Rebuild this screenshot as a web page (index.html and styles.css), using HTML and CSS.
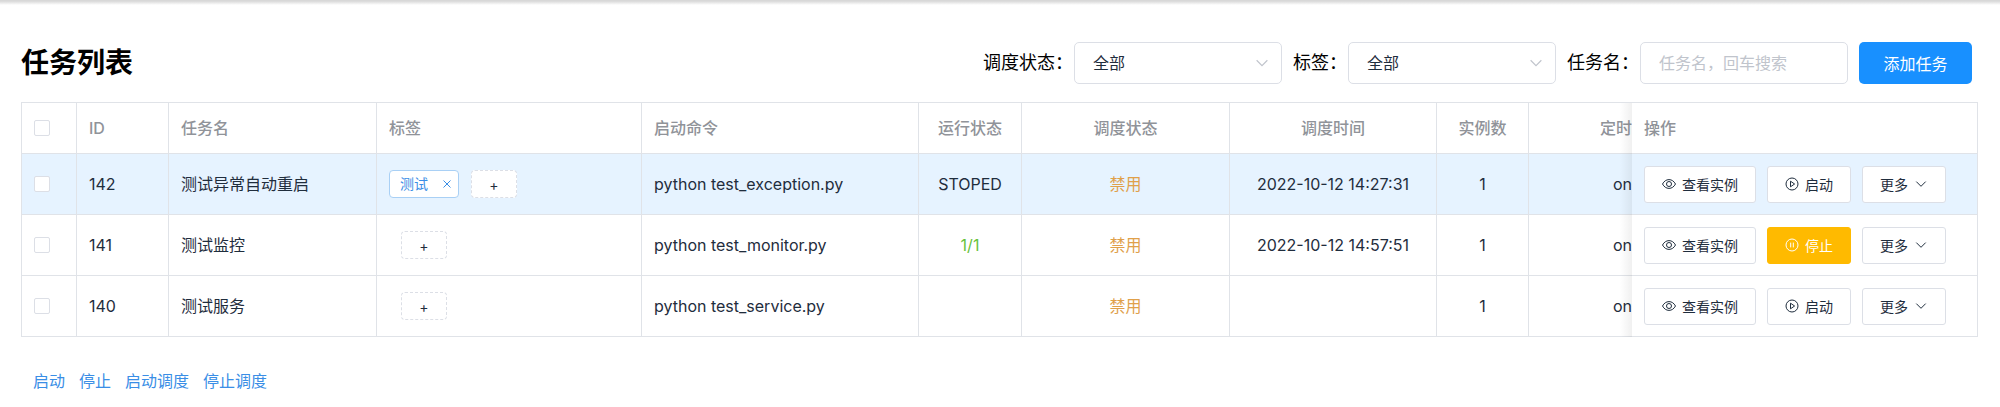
FILE: index.html
```html
<!DOCTYPE html>
<html lang="zh-CN">

<head>
    <meta charset="UTF-8">
    <meta name="viewport" content="width=device-width, initial-scale=1">
    <title>任务列表</title>
    <link rel="stylesheet" href="styles.css">
</head>

<body>
    <!-- 图标 -->
    <svg class="sprite" aria-hidden="true">
        <symbol id="icon-view" viewBox="0 0 14 14">
            <path d="M.5 7C2 4.200 4.300 2.600 7 2.600S12 4.200 13.500 7C12 9.800 9.700 11.400 7 11.400S2 9.800.5 7z" />
            <circle cx="7" cy="7" r="2.500" />
        </symbol>
        <symbol id="icon-play" viewBox="0 0 14 14">
            <circle cx="7" cy="7" r="6" />
            <path d="M5.500 4.200v5.600L9.600 7z" />
        </symbol>
        <symbol id="icon-pause" viewBox="0 0 14 14">
            <circle cx="7" cy="7" r="6" />
            <path d="M5.700 4.600v4.800M8.300 4.600v4.800" />
        </symbol>
        <symbol id="icon-down" viewBox="0 0 14 14">
            <path d="M2.300 4.600L7 9.300l4.700-4.700" />
        </symbol>
        <symbol id="icon-close" viewBox="0 0 14 14">
            <path d="M3.500 3.500l7 7M10.500 3.500l-7 7" />
        </symbol>
    </svg>

    <div class="topbar"></div>
    <main class="page">
        <div class="toolbar">
            <h1 class="title">任务列表</h1>
            <form class="filters">
                <div class="field">
                    <label for="status">调度状态：</label>
                    <div class="select">
                        <select id="status"><option>全部</option></select>
                        <svg class="icon"><use href="#icon-down" /></svg>
                    </div>
                </div>
                <div class="field">
                    <label for="tag">标签：</label>
                    <div class="select">
                        <select id="tag"><option>全部</option></select>
                        <svg class="icon"><use href="#icon-down" /></svg>
                    </div>
                </div>
                <div class="field">
                    <label for="taskName">任务名：</label>
                    <input id="taskName" class="text" type="text" placeholder="任务名，回车搜索">
                </div>
                <button type="button" class="add">添加任务</button>
            </form>
        </div>

        <div class="table-wrap">
            <table class="table">
                <colgroup>
                    <col class="w-check">
                    <col class="w-small">
                    <col class="w-normal">
                    <col class="w-tags">
                    <col class="w-command">
                    <col class="w-run">
                    <col class="w-normal">
                    <col class="w-time">
                    <col class="w-small">
                    <col>
                    <col class="w-action">
                </colgroup>
                <thead>
                    <tr>
                        <th><input type="checkbox" class="check" aria-label="全选"></th>
                        <th>ID</th>
                        <th>任务名</th>
                        <th>标签</th>
                        <th>启动命令</th>
                        <th class="center">运行状态</th>
                        <th class="center">调度状态</th>
                        <th class="center">调度时间</th>
                        <th class="center">实例数</th>
                        <th class="cut">定时</th>
                        <th class="fixed">操作</th>
                    </tr>
                </thead>
                <tbody>
                    <tr class="hover">
                        <td><input type="checkbox" class="check" aria-label="142"></td>
                        <td>142</td>
                        <td>测试异常自动重启</td>
                        <td>
                            <div class="tags">
                                <span class="tag">测试<button type="button" class="tag-close" aria-label="删除"><svg class="icon"><use href="#icon-close" /></svg></button></span>
                                <button type="button" class="tag-add">+</button>
                            </div>
                        </td>
                        <td>python test_exception.py</td>
                        <td class="center">STOPED</td>
                        <td class="center warning">禁用</td>
                        <td class="center">2022-10-12 14:27:31</td>
                        <td class="center">1</td>
                        <td class="cut">on</td>
                        <td class="fixed">
                            <div class="actions">
                                <button type="button" class="btn"><svg class="icon"><use href="#icon-view" /></svg>查看实例</button>
                                <button type="button" class="btn"><svg class="icon"><use href="#icon-play" /></svg>启动</button>
                                <button type="button" class="btn">更多<svg class="icon"><use href="#icon-down" /></svg></button>
                            </div>
                        </td>
                    </tr>
                    <tr>
                        <td><input type="checkbox" class="check" aria-label="141"></td>
                        <td>141</td>
                        <td>测试监控</td>
                        <td>
                            <div class="tags">
                                <button type="button" class="tag-add">+</button>
                            </div>
                        </td>
                        <td>python test_monitor.py</td>
                        <td class="center success">1/1</td>
                        <td class="center warning">禁用</td>
                        <td class="center">2022-10-12 14:57:51</td>
                        <td class="center">1</td>
                        <td class="cut">on</td>
                        <td class="fixed">
                            <div class="actions">
                                <button type="button" class="btn"><svg class="icon"><use href="#icon-view" /></svg>查看实例</button>
                                <button type="button" class="btn btn-stop"><svg class="icon"><use href="#icon-pause" /></svg>停止</button>
                                <button type="button" class="btn">更多<svg class="icon"><use href="#icon-down" /></svg></button>
                            </div>
                        </td>
                    </tr>
                    <tr>
                        <td><input type="checkbox" class="check" aria-label="140"></td>
                        <td>140</td>
                        <td>测试服务</td>
                        <td>
                            <div class="tags">
                                <button type="button" class="tag-add">+</button>
                            </div>
                        </td>
                        <td>python test_service.py</td>
                        <td class="center"></td>
                        <td class="center warning">禁用</td>
                        <td class="center"></td>
                        <td class="center">1</td>
                        <td class="cut">on</td>
                        <td class="fixed">
                            <div class="actions">
                                <button type="button" class="btn"><svg class="icon"><use href="#icon-view" /></svg>查看实例</button>
                                <button type="button" class="btn"><svg class="icon"><use href="#icon-play" /></svg>启动</button>
                                <button type="button" class="btn">更多<svg class="icon"><use href="#icon-down" /></svg></button>
                            </div>
                        </td>
                    </tr>
                </tbody>
            </table>
        </div>

        <div class="batch">
            <button type="button" class="link">启动</button>
            <button type="button" class="link">停止</button>
            <button type="button" class="link">启动调度</button>
            <button type="button" class="link">停止调度</button>
        </div>
    </main>
</body>

</html>
```

FILE: styles.css
```css
* {
    box-sizing: border-box;
    margin: 0;
    padding: 0;
}

body {
    background: #fff;
    color: #1f2d3d;
    font-family: Inter, "Noto Sans CJK SC", sans-serif;
    font-size: 16px;
    line-height: 24px;
}

button,
input,
select {
    font-family: inherit;
    font-size: inherit;
    color: inherit;
}

button {
    cursor: pointer;
}

.sprite {
    position: absolute;
    width: 0;
    height: 0;
}

.icon {
    flex: none;
    width: 14px;
    height: 14px;
    fill: none;
    stroke: currentColor;
    stroke-width: 1;
}

.topbar {
    height: 5px;
    background: linear-gradient(#d8d8d8 20%, #fff);
}

.page {
    padding: 37px 22px 0 21px;
}

/* 标题和筛选 */
.toolbar {
    display: flex;
    align-items: center;
    justify-content: space-between;
    padding-right: 6px;
}

.title {
    color: #000;
    font-size: 28px;
    line-height: 42px;
}

.filters {
    display: flex;
    gap: 11px;
}

.field {
    display: flex;
    align-items: center;
    color: #000;
    font-size: 18px;
}

.field label {
    margin-right: 1px;
}

.select {
    position: relative;
    width: 208px;
}

.select select,
.text {
    width: 208px;
    height: 42px;
    padding: 0 18px;
    border: 1px solid #dcdfe6;
    border-radius: 5px;
    background: #fff;
    color: #1f2d3d;
    font-size: 16px;
    outline: none;
    appearance: none;
}

.select .icon {
    position: absolute;
    top: 13px;
    right: 12px;
    width: 16px;
    height: 16px;
    color: #c0c4cc;
    pointer-events: none;
}

.text::placeholder {
    color: #c0c4cc;
}

.add {
    width: 113px;
    height: 42px;
    border: none;
    border-radius: 5px;
    background: #1890ff;
    color: #fff;
}

/* 表格 */
.table-wrap {
    margin-top: 18px;
    overflow: hidden;
    border: 1px solid #e0e3e8;
    border-bottom: none;
}

.table {
    width: 100%;
    min-width: 1900px;
    table-layout: fixed;
    border-collapse: separate;
    border-spacing: 0;
}

.w-check {
    width: 55px;
}

.w-small {
    width: 92px;
}

.w-normal {
    width: 208px;
}

.w-time {
    width: 207px;
}

.w-tags {
    width: 265px;
}

.w-command {
    width: 277px;
}

.w-run {
    width: 103px;
}

.w-action {
    width: 345px;
}

.table th,
.table td {
    height: 61px;
    padding: 0 11px 0 12px;
    border-right: 1px solid #e0e3e8;
    border-bottom: 1px solid #e0e3e8;
    background: #fff;
    text-align: left;
    white-space: nowrap;
}

.table th {
    height: 51px;
    color: #909399;
    font-weight: 500;
}

.table .center {
    padding: 0;
    text-align: center;
}

.table .cut {
    padding: 0;
    border-right: none;
    text-align: right;
}

.table .hover td {
    background: #e6f3ff;
}

.table .fixed {
    position: relative;
    border-right: none;
}

/* 固定列左侧阴影 */
.fixed::before {
    content: "";
    position: absolute;
    top: 0;
    bottom: -1px;
    left: -12px;
    width: 12px;
    background: linear-gradient(to left, rgba(0, 0, 0, .06), rgba(0, 0, 0, 0));
}

.table .warning {
    color: #e0a04a;
}

.table .success {
    color: #67c23a;
}

.check {
    display: block;
    width: 16px;
    height: 16px;
    border: 1px solid #dcdfe6;
    border-radius: 2px;
    background: #fff;
    appearance: none;
}

.tags {
    display: flex;
}

.tag {
    display: flex;
    align-items: center;
    justify-content: space-between;
    width: 70px;
    height: 28px;
    padding: 0 4px 0 10px;
    border: 1px solid #a9d0f5;
    border-radius: 4px;
    background: #fff;
    color: #3a8ee6;
    font-size: 14px;
}

.tag-close {
    display: flex;
    border: none;
    background: none;
}

.tag-add {
    width: 46px;
    height: 28px;
    margin-left: 12px;
    border: 1px dashed #dcdfe6;
    border-radius: 4px;
    background: #fff;
    font-size: 14px;
}

.actions {
    display: flex;
    gap: 11px;
}

.btn {
    display: flex;
    align-items: center;
    gap: 6px;
    height: 37px;
    padding: 0 17px;
    border: 1px solid #dcdfe6;
    border-radius: 3px;
    background: #fff;
    font-size: 14px;
}

.btn-stop {
    border-color: #ffba00;
    background: #ffba00;
    color: #fff;
}

/* 批量操作 */
.batch {
    display: flex;
    gap: 14px;
    padding: 32px 12px;
}

.link {
    border: none;
    background: none;
    color: #3a8ee6;
    line-height: 24px;
}
```
